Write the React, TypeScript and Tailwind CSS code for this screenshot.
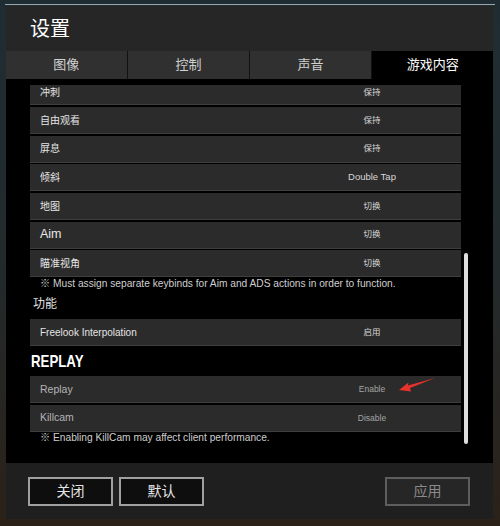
import React from "react";

type Row = { label: string; value: string; big?: boolean; dim?: boolean };

const keyRows: Row[] = [
  { label: "自由观看", value: "保持" },
  { label: "屏息", value: "保持" },
  { label: "倾斜", value: "Double Tap" },
  { label: "地图", value: "切换" },
  { label: "Aim", value: "切换", big: true },
  { label: "瞄准视角", value: "切换" },
];

const tabs = ["图像", "控制", "声音", "游戏内容"];

function SettingRow({ label, value, big, dim }: Row) {
  return (
    <div className="flex h-[27px] items-center border-b border-[#3e3e3e] bg-[#2b2b2b]">
      <span
        className={`flex-1 pl-[10px] ${big ? "text-[12.5px] text-[#e8e8e8]" : dim ? "text-[10.5px] text-[#b4b4b4]" : "text-[10px] text-[#e4e4e4]"}`}
      >
        {label}
      </span>
      <span
        className={`mr-[39px] w-[100px] text-center ${dim ? "text-[8.5px] text-[#a4a4a4]" : value.length > 4 ? "text-[9.5px] text-[#d8d8d8]" : "text-[8.5px] text-[#d8d8d8]"}`}
      >
        {value}
      </span>
    </div>
  );
}

function RedArrow() {
  return (
    <svg className="absolute left-[391px] top-[298px]" width="40" height="17" viewBox="0 0 40 17" aria-hidden="true">
      <path d="M2 13 L11.5 5.5 L11 8.5 L38 1 L13 11 L14 14.5 Z" fill="#e8322b" />
    </svg>
  );
}

export default function App() {
  return (
    <div className="relative h-[526px] w-[500px] overflow-hidden bg-gradient-to-b from-[#1f2d33] via-[#222a2c] to-[#2b2118] font-['Liberation_Sans','Noto_Sans_CJK_SC',sans-serif]">
      <div className="mx-[5px] mt-[4px] h-px bg-[#9aa6aa]" />
      <div className="ml-[6px] mt-[1px] w-[487px]">
        {/* 标题 */}
        <div className="flex h-[45px] items-center bg-[#262626] pl-[24px]">
          <h1 className="text-[20px] leading-none text-white">设置</h1>
        </div>

        {/* 标签页 */}
        <div className="grid h-[28px] grid-cols-4 gap-[1.5px] bg-[#111]">
          {tabs.map((t, i) => (
            <div
              key={t}
              className={`flex items-center justify-center text-[13px] ${i === 3 ? "bg-black text-white" : "bg-[#303030] text-[#d0d0d0]"}`}
            >
              {t}
            </div>
          ))}
        </div>

        {/* 内容 */}
        <div className="relative h-[384px] overflow-hidden bg-black pl-[24px] pr-[32px]">
          <div className="mt-[6px] flex h-[20px] items-center border-b border-[#3e3e3e] bg-[#2b2b2b] pb-[4px]">
            <span className="flex-1 pl-[10px] text-[10px] text-[#e4e4e4]">冲刺</span>
            <span className="mr-[39px] w-[100px] text-center text-[8.5px] text-[#d8d8d8]">保持</span>
          </div>
          <div className="mt-[2px] flex flex-col gap-[1.7px]">
            {keyRows.map((r) => (
              <SettingRow key={r.label} {...r} />
            ))}
          </div>
          <p className="flex h-[12px] items-center pl-[10px] text-[10.2px] text-[#cfcfcf]">
            ※ Must assign separate keybinds for Aim and ADS actions in order to function.
          </p>
          <div className="flex h-[30px] items-center pl-[3px] text-[12px] text-[#e0e0e0]">功能</div>
          <SettingRow label="Freelook Interpolation" value="启用" />
          <div className="flex h-[30px] items-center pl-[1px]">
            <span className="inline-block origin-left scale-x-[0.78] text-[17px] font-bold text-white">REPLAY</span>
          </div>
          <div className="flex flex-col gap-[1.7px]">
            <SettingRow label="Replay" value="Enable" dim />
            <SettingRow label="Killcam" value="Disable" dim />
          </div>
          <p className="flex h-[12px] items-center pl-[10px] text-[10.2px] text-[#cfcfcf]">
            ※ Enabling KillCam may affect client performance.
          </p>

          <RedArrow />
          <div className="absolute left-[458px] top-[174px] h-[191px] w-[4px] rounded-sm bg-[#dedede]" />
        </div>

        {/* 底部按钮 */}
        <div className="flex h-[56px] items-start bg-[#1f1f1f] pl-[22px] pr-[23px] pt-[14px]">
          <button className="h-[29px] w-[85px] border-2 border-[#a0a0a0] bg-[#0e0e0e] text-[14px] text-[#e6e6e6]">关闭</button>
          <button className="ml-[6px] h-[29px] w-[85px] border-2 border-[#a0a0a0] bg-[#0e0e0e] text-[14px] text-[#e6e6e6]">默认</button>
          <button className="ml-auto h-[29px] w-[85px] border-2 border-[#5e5e5e] bg-[#262626] text-[14px] text-[#8a8a8a]">应用</button>
        </div>
      </div>
    </div>
  );
}
